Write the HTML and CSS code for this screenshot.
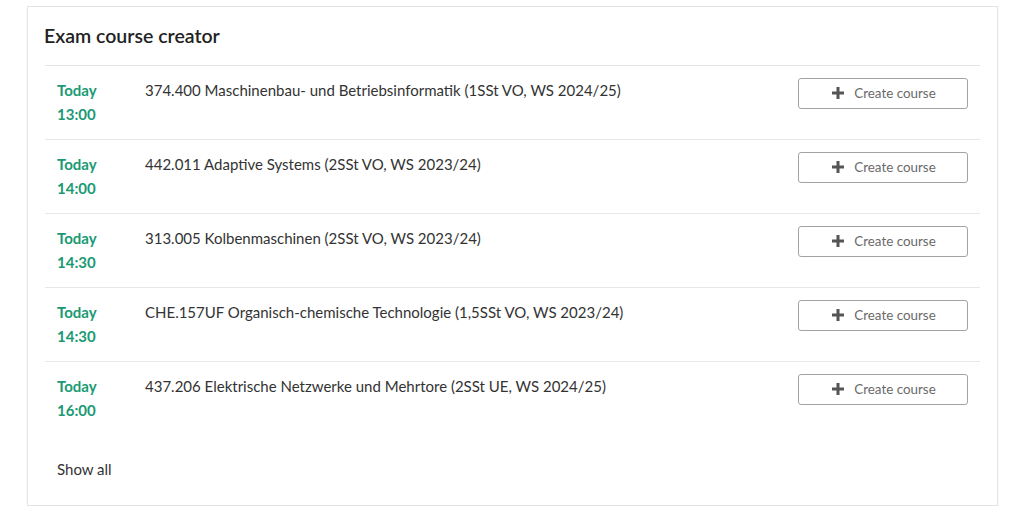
FILE: index.html
```html
<!DOCTYPE html>
<html>
<head>
<meta charset="utf-8">
<link rel="stylesheet" href="styles.css">
</head>
<body>
<div class="card">
  <h2 class="title">Exam course creator</h2>
  <div class="list">
    <div class="row">
      <div class="time"><div>Today</div><div>13:00</div></div>
      <div class="name">374.400 Maschinenbau- und Betriebsinformatik (1SSt VO, WS 2024/25)</div>
      <button class="btn"><svg class="plus" viewBox="0 0 12 12"><path d="M4.5 0h3v4.5H12v3H7.5V12h-3V7.5H0v-3h4.5z"/></svg><span>Create course</span></button>
    </div>
    <div class="row">
      <div class="time"><div>Today</div><div>14:00</div></div>
      <div class="name">442.011 Adaptive Systems (2SSt VO, WS 2023/24)</div>
      <button class="btn"><svg class="plus" viewBox="0 0 12 12"><path d="M4.5 0h3v4.5H12v3H7.5V12h-3V7.5H0v-3h4.5z"/></svg><span>Create course</span></button>
    </div>
    <div class="row">
      <div class="time"><div>Today</div><div>14:30</div></div>
      <div class="name">313.005 Kolbenmaschinen (2SSt VO, WS 2023/24)</div>
      <button class="btn"><svg class="plus" viewBox="0 0 12 12"><path d="M4.5 0h3v4.5H12v3H7.5V12h-3V7.5H0v-3h4.5z"/></svg><span>Create course</span></button>
    </div>
    <div class="row">
      <div class="time"><div>Today</div><div>14:30</div></div>
      <div class="name">CHE.157UF Organisch-chemische Technologie (1,5SSt VO, WS 2023/24)</div>
      <button class="btn"><svg class="plus" viewBox="0 0 12 12"><path d="M4.5 0h3v4.5H12v3H7.5V12h-3V7.5H0v-3h4.5z"/></svg><span>Create course</span></button>
    </div>
    <div class="row">
      <div class="time"><div>Today</div><div>16:00</div></div>
      <div class="name">437.206 Elektrische Netzwerke und Mehrtore (2SSt UE, WS 2024/25)</div>
      <button class="btn"><svg class="plus" viewBox="0 0 12 12"><path d="M4.5 0h3v4.5H12v3H7.5V12h-3V7.5H0v-3h4.5z"/></svg><span>Create course</span></button>
    </div>
  </div>
  <a class="show-all">Show all</a>
</div>
</body>
</html>
```

FILE: styles.css
```css
html, body {
  margin: 0;
  padding: 0;
  background: #fff;
}
body {
  font-family: Lato, "Open Sans", sans-serif;
  color: #333;
  font-size: 15px;
}
.card {
  margin: 6px 0 0 27px;
  width: 971px;
  height: 500px;
  box-sizing: border-box;
  border: 1px solid #e2e2e8;
  box-shadow: 0 1px 2px rgba(0,0,0,0.05);
  padding: 0 17px 0 16px;
}
.title {
  margin: 0;
  padding: 17px 0 0 0;
  height: 41px;
  font-size: 19.5px;
  font-weight: 600;
  line-height: 24px;
  color: #222;
}
.list {
  display: flex;
  flex-direction: column;
  margin-left: 1px;
}
.row {
  display: flex;
  align-items: flex-start;
  border-top: 1px solid #e8e8e8;
  padding: 12px 12px 13px 12px;
  height: 48px;
}
.row:first-child { border-top-color: #e4e4e4; }
.time {
  width: 88px;
  flex: none;
  color: #1a9a74;
  font-weight: 700;
  line-height: 24px;
}
.name {
  flex: 1;
  line-height: 24px;
  color: #333;
}
.btn {
  flex: none;
  width: 170px;
  height: 31px;
  box-sizing: border-box;
  border: 1px solid #a3a3a3;
  border-radius: 3px;
  background: #fff;
  display: flex;
  align-items: center;
  justify-content: center;
  gap: 10px;
  font-family: inherit;
  font-size: 13.4px;
  color: #6a6a6a;
  padding: 0 0 1px 2px;
}
.plus {
  width: 12px;
  height: 12px;
  fill: #555;
}
.show-all {
  display: block;
  margin-top: 22px;
  padding-left: 13px;
  line-height: 24px;
  color: #333;
}
```
